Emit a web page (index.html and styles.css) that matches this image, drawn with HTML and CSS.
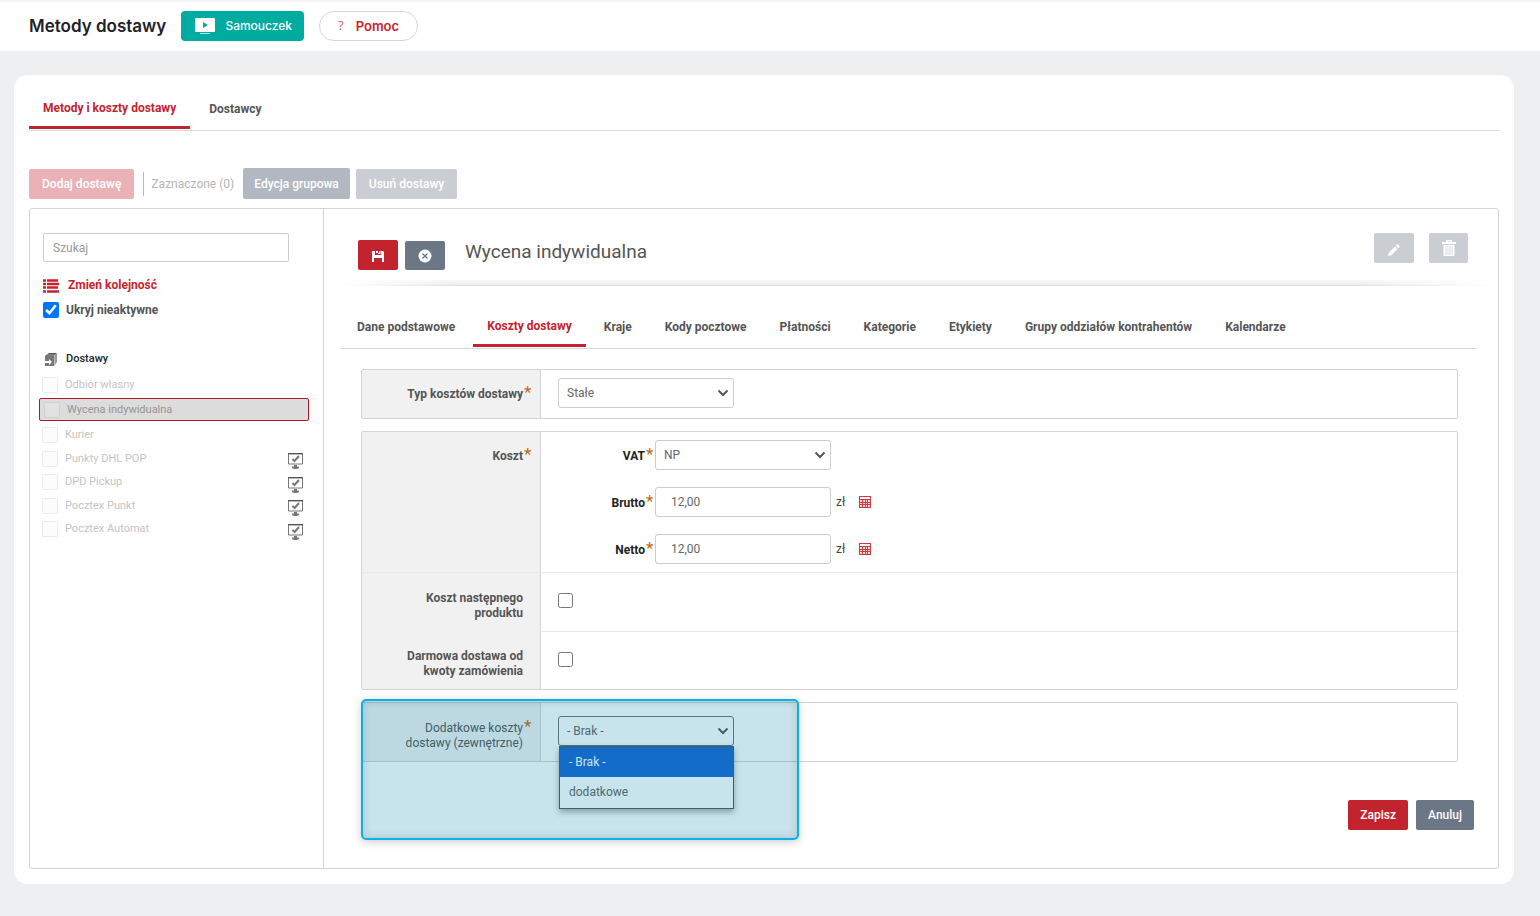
FILE: index.html
```html
<!DOCTYPE html>
<html lang="pl">
<head>
  <meta charset="UTF-8">
  <meta name="viewport" content="width=device-width, initial-scale=1.0">
  <title>Metody dostawy</title>
  <link rel="stylesheet" href="styles.css">
</head>
<body>
  <!-- shared icons -->
  <svg class="sprite" aria-hidden="true">
    <symbol id="monitor" viewBox="0 0 16 16">
      <path d="M.5 1h14v10H.5z" fill="#fff" stroke="#777"/>
      <path d="M0 .5h15" stroke="#555"/>
      <path d="M4.500 6l2 2L11 3" fill="none" stroke="#777" stroke-width="2"/>
      <path d="M6 12h3v1.500h2V15l-2 1H6l-2-1v-1.500h2z" fill="#777"/>
    </symbol>
    <symbol id="calc" viewBox="0 0 12 12">
      <rect x="0" y="0" width="12" height="12" fill="#cb3c43"/>
      <path d="M1 1h10v2H1z" fill="#fff"/>
      <path d="M1 4h2v2H1zM4 4h2v2H4zM7 4h1v2H7zM9 4h2v2H9zM1 7h2v1H1zM4 7h2v1H4zM7 7h1v1H7zM9 7h2v1H9zM1 9h2v2H1zM4 9h2v2H4zM7 9h1v2H7zM9 9h2v2H9z" fill="#f6dadb"/>
    </symbol>
  </svg>

  <header class="topbar">
    <h1>Metody dostawy</h1>
    <button type="button" class="tutorial">
      <svg width="20" height="16" viewBox="0 0 20 16"><rect width="20" height="14" rx="1" fill="#fff"/><path d="M8 4l5 3-5 3z" fill="#00aba0"/><path d="M5 15.500h10" stroke="#b5e5e1"/></svg>
      Samouczek
    </button>
    <button type="button" class="help"><span class="question">?</span>Pomoc</button>
  </header>

  <div class="card">
    <nav class="tabs">
      <a href="#" class="tab active">Metody i koszty dostawy</a>
      <a href="#" class="tab">Dostawcy</a>
    </nav>

    <div class="toolbar">
      <button type="button" class="btn btn-add" disabled>Dodaj dostawę</button>
      <span class="selected-count">Zaznaczone (0)</span>
      <button type="button" class="btn btn-group">Edycja grupowa</button>
      <button type="button" class="btn btn-muted" disabled>Usuń dostawy</button>
    </div>

    <div class="panel">
      <aside class="sidebar">
        <input type="search" class="search" placeholder="Szukaj" aria-label="Szukaj">
        <a href="#" class="reorder">
          <svg width="16" height="16" viewBox="0 0 16 16"><path d="M0 3.500h3M4 3.500h11M0 7h3M4 7h12M0 10.500h3M4 10.500h11M0 14.500h3M4 14.500h12" stroke="#c8232c" stroke-width="2.500"/></svg>
          Zmień kolejność
        </a>
        <label class="hide-inactive"><input type="checkbox" checked>Ukryj nieaktywne</label>

        <h2 class="list-title">
          <svg width="12" height="13" viewBox="0 0 12 13"><path d="M0 3l4-3h8L9 3z" fill="#555"/><path d="M9 3l3-3v9l-3 4z" fill="#999"/><path d="M0 3h9v10H0z" fill="#777"/><path d="M0 8h4V6l3 3-3 3v-2H0z" fill="#fff"/><path d="M9.500 3v9M2 2h8" stroke="#ddd" stroke-width=".6"/></svg>
          Dostawy
        </h2>
        <ul class="list">
          <li><label><input type="checkbox" disabled>Odbiór własny</label></li>
          <li class="current"><label><input type="checkbox" disabled>Wycena indywidualna</label></li>
          <li><label><input type="checkbox" disabled>Kurier</label></li>
          <li><label><input type="checkbox" disabled>Punkty DHL POP</label><svg class="monitor"><use href="#monitor"/></svg></li>
          <li><label><input type="checkbox" disabled>DPD Pickup</label><svg class="monitor"><use href="#monitor"/></svg></li>
          <li><label><input type="checkbox" disabled>Pocztex Punkt</label><svg class="monitor"><use href="#monitor"/></svg></li>
          <li><label><input type="checkbox" disabled>Pocztex Automat</label><svg class="monitor"><use href="#monitor"/></svg></li>
        </ul>
      </aside>

      <main class="content">
        <div class="content-header">
          <button type="button" class="icon-btn save" aria-label="Zapisz">
            <svg width="12" height="14" viewBox="0 0 12 14"><path d="M0 3h3v4h6V3h2l1 1v10h-2v-4H2v4H0zM4 3h2v2H4zM7 3h1.500v3H6V5h1z" fill="#fff"/></svg>
          </button>
          <button type="button" class="icon-btn cancel" aria-label="Anuluj">
            <svg width="14" height="14" viewBox="0 0 14 14"><circle cx="7" cy="7" r="6.500" fill="#fff"/><path d="M4.500 4.500l5 5M9.500 4.500l-5 5" stroke="#6b7785" stroke-width="1.300"/></svg>
          </button>
          <h2>Wycena indywidualna</h2>
          <button type="button" class="icon-btn tool" aria-label="Edytuj" disabled>
            <svg width="14" height="18" viewBox="0 0 14 18"><path d="M1 17l.5-3L8 7.500l2.500 2.500L4 16.500zM8.800 6.700L10.500 5 13 7.500l-1.700 1.700z" fill="#fff"/></svg>
          </button>
          <button type="button" class="icon-btn tool" aria-label="Usuń" disabled>
            <svg width="16" height="16" viewBox="0 0 16 16"><path d="M5 2V0h6v2h4v2H1V2zM6.500 1.200V2h3v-.8zM2.500 5h11v11h-11z" fill="#fff"/><path d="M5 6v9M7 6v9M9 6v9M11 6v9" stroke="#d9dbdf"/></svg>
          </button>
        </div>

        <nav class="tabs subtabs">
          <a href="#" class="tab">Dane podstawowe</a>
          <a href="#" class="tab active">Koszty dostawy</a>
          <a href="#" class="tab">Kraje</a>
          <a href="#" class="tab">Kody pocztowe</a>
          <a href="#" class="tab">Płatności</a>
          <a href="#" class="tab">Kategorie</a>
          <a href="#" class="tab">Etykiety</a>
          <a href="#" class="tab">Grupy oddziałów kontrahentów</a>
          <a href="#" class="tab">Kalendarze</a>
        </nav>

        <form class="form">
          <section class="group">
            <div class="row">
              <label class="row-label" for="costType"><span>Typ kosztów dostawy</span><b class="req">*</b></label>
              <div class="row-field single">
                <select id="costType" class="control"><option>Stałe</option></select>
              </div>
            </div>
          </section>

          <section class="group">
            <div class="row">
              <div class="row-label"><span>Koszt</span><b class="req">*</b></div>
              <div class="row-field prices">
                <div class="price">
                  <label for="vat">VAT<b class="req">*</b></label>
                  <select id="vat" class="control"><option>NP</option></select>
                </div>
                <div class="price">
                  <label for="gross">Brutto<b class="req">*</b></label>
                  <input type="text" id="gross" class="control" value="12,00">
                  <span class="unit">zł</span><svg class="calc"><use href="#calc"/></svg>
                </div>
                <div class="price">
                  <label for="net">Netto<b class="req">*</b></label>
                  <input type="text" id="net" class="control" value="12,00">
                  <span class="unit">zł</span><svg class="calc"><use href="#calc"/></svg>
                </div>
              </div>
            </div>
            <div class="row line-full">
              <label class="row-label two-line" for="nextCost"><span>Koszt następnego produktu</span></label>
              <div class="row-field"><input type="checkbox" id="nextCost" class="check"></div>
            </div>
            <div class="row line-field">
              <label class="row-label two-line" for="freeShipping"><span>Darmowa dostawa od kwoty zamówienia</span></label>
              <div class="row-field"><input type="checkbox" id="freeShipping" class="check"></div>
            </div>
          </section>

          <div class="extra">
            <section class="group">
              <div class="row">
                <label class="row-label two-line plain" for="extraCost"><span>Dodatkowe koszty dostawy (zewnętrzne)</span><b class="req">*</b></label>
                <div class="row-field">
                  <div class="dropdown">
                    <select id="extraCost" class="control open"><option>- Brak -</option><option>dodatkowe</option></select>
                    <ul class="options">
                      <li class="chosen">- Brak -</li>
                      <li>dodatkowe</li>
                    </ul>
                  </div>
                </div>
              </div>
            </section>
            <div class="highlight"></div>
          </div>

          <div class="actions">
            <button type="submit" class="btn btn-save">Zapisz</button>
            <button type="button" class="btn btn-cancel">Anuluj</button>
          </div>
        </form>
      </main>
    </div>
  </div>
</body>
</html>
```
FILE: styles.css
```css
* {
  box-sizing: border-box;
}

body {
  margin: 0;
  background: #eeeff1;
  font-family: Roboto, "Liberation Sans", sans-serif;
  font-size: 12px;
  line-height: 16px;
  color: #555;
}

h1, h2, ul {
  margin: 0;
  padding: 0;
}

ul {
  list-style: none;
}

a {
  text-decoration: none;
}

button, input, select {
  font-family: inherit;
  font-size: 12px;
}

button {
  border: none;
  padding: 0;
  cursor: pointer;
}

svg {
  display: block;
  flex: none;
}

.sprite {
  position: absolute;
  width: 0;
  height: 0;
}

/* top bar */
.topbar {
  display: flex;
  align-items: center;
  gap: 15px;
  height: 51px;
  padding: 0 29px 2px;
  background: #fff;
  border-top: 2px solid #f4f5f6;
  font-family: Inter, sans-serif;
}

.topbar h1 {
  font-size: 17px;
  line-height: 24px;
  font-weight: 600;
  color: #1f2229;
}

.tutorial, .help {
  display: flex;
  align-items: center;
  height: 30px;
  font-family: Inter, sans-serif;
}

.tutorial {
  gap: 10px;
  padding: 0 12px 0 14px;
  background: #00aba0;
  border-radius: 4px;
  color: #fff;
  font-size: 12px;
  font-weight: 500;
}

.help {
  gap: 12px;
  padding: 0 18px;
  background: #fff;
  border: 1px solid #d5d7db;
  border-radius: 15px;
  color: #c8232c;
  font-size: 13px;
  font-weight: 600;
}

.question {
  padding-bottom: 2px;
  font-family: "Open Sans", sans-serif;
  font-size: 13px;
  font-weight: 400;
  color: #d9605c;
}

/* card */
.card {
  margin: 24px 26px 0 14px;
  padding: 0 15px 15px;
  background: #fff;
  border-radius: 14px;
}

.tabs {
  display: flex;
  align-items: flex-end;
  gap: 5px;
  height: 56px;
  padding-bottom: 1px;
  border-bottom: 1px solid #d9d9d9;
}

.tab {
  padding: 0 14px 12px;
  font-weight: 700;
  color: #555;
}

.tab.active {
  padding-bottom: 10px;
  border-bottom: 3px solid #c3232d;
  color: #c3232d;
}

.toolbar {
  display: flex;
  align-items: center;
  margin: 37px 0 9px;
}

.btn {
  height: 30px;
  padding: 0 12px;
  border-radius: 2px;
  color: #fff;
  font-weight: 500;
}

.toolbar .btn {
  padding: 0 13px;
}

.btn-add {
  background: #eab2b6;
}

.selected-count {
  margin: 0 9px;
  padding: 4px 0 4px 7px;
  border-left: 1px solid #b9b9b9;
  color: #b5b5b5;
}

.toolbar .btn-group {
  height: 31px;
  margin-right: 6px;
  padding: 0 11px;
  background: #b1b8c1;
}

.btn-muted {
  background: #cacdd2;
}

.panel {
  display: flex;
  border: 1px solid #d3d3d3;
  border-radius: 3px;
}

/* left column */
.sidebar {
  width: 294px;
  flex: none;
  padding: 24px 14px 24px 9px;
  border-right: 1px solid #d3d3d3;
}

.search {
  display: block;
  width: 246px;
  height: 29px;
  margin-left: 4px;
  padding: 0 9px;
  border: 1px solid #ccc;
  border-radius: 2px;
}

.search::placeholder {
  color: #999;
}

.reorder {
  display: flex;
  align-items: center;
  gap: 9px;
  margin: 15px 0 9px 4px;
  color: #c8232c;
  font-weight: 700;
}

.hide-inactive {
  display: flex;
  align-items: center;
  gap: 7px;
  margin-left: 4px;
  font-weight: 700;
}

.hide-inactive input {
  width: 16px;
  height: 16px;
  margin: 0;
}

.list-title {
  display: flex;
  align-items: center;
  gap: 9px;
  margin: 33px 0 6px 6px;
  font-size: 11px;
  font-weight: 500;
  color: #222;
}

.list li {
  display: flex;
  align-items: center;
  justify-content: space-between;
  height: 23px;
  padding: 0 5px 0 3px;
  font-size: 11px;
  color: #c4c4c4;
}

.list li:nth-child(odd) {
  height: 24px;
}

.list label {
  display: flex;
  align-items: center;
  gap: 7px;
}

.list input {
  appearance: none;
  width: 16px;
  height: 16px;
  margin: 0;
  background: #fcfcfc;
  border: 1px solid #ebebeb;
  border-radius: 2px;
}

.list .current {
  margin: 1px 0 2px;
  padding-left: 4px;
  background: #dcdcdc;
  border: 1px solid #b01825;
  border-radius: 2px;
  color: #949494;
}

.list .current input {
  background: #e2e2e2;
  border-color: #d2d2d2;
}

.monitor {
  width: 16px;
  height: 16px;
  margin-top: 5px;
}

/* right column */
.content {
  flex: 1;
  padding: 0 21px 38px 17px;
}

.content-header {
  display: flex;
  align-items: flex-end;
  height: 77px;
  margin-right: -18px;
  padding: 0 27px 16px 17px;
  background: linear-gradient(90deg, #fff, transparent 10%, transparent 88%, #fff) bottom / 100% 6px no-repeat,
    linear-gradient(#f8f8f8, #f1f1f1 65%, #dedede) bottom / 100% 6px no-repeat;
}

.content-header h2 {
  flex: 1;
  margin-left: 20px;
  padding-bottom: 6px;
  font-size: 19px;
  line-height: 24px;
  font-weight: 400;
}

.icon-btn {
  display: flex;
  align-items: center;
  justify-content: center;
  width: 40px;
  height: 30px;
  border-radius: 2px;
}

.save {
  background: #c3232d;
}

.cancel {
  height: 29px;
  margin-left: 7px;
  background: #6b7785;
}

.tool {
  margin-bottom: 7px;
  background: #cacdd2;
}

.tool + .tool {
  width: 39px;
  margin-left: 15px;
}

.subtabs {
  height: 63px;
  padding-left: 2px;
}

.subtabs .active {
  margin: 0 -1px;
}

.form {
  padding: 20px 19px 0 20px;
}

.group {
  margin-bottom: 12px;
  border: 1px solid #d3d3d3;
  border-radius: 2px;
}

.row {
  display: flex;
}

.row-label {
  display: flex;
  justify-content: flex-end;
  width: 178px;
  flex: none;
  padding: 17px 17px 0 40px;
  background: #f1f1f1;
  font-weight: 700;
  line-height: 15px;
  text-align: right;
}

.row-label span {
  flex: 1;
}

.req {
  display: inline-block;
  width: 8px;
  padding-left: 1px;
  font-size: 17px;
  font-weight: 400;
  line-height: 15px;
  color: #c8690f;
}

.row-label .req {
  margin-right: -8px;
  line-height: 11px;
}

.row-field {
  flex: 1;
  padding: 8px 17px;
  border-left: 1px solid #d3d3d3;
}

.single {
  padding-bottom: 10px;
}

.control {
  display: block;
  width: 176px;
  height: 30px;
  padding: 0 8px;
  background: #fff;
  border: 1px solid #ccc;
  border-radius: 3px;
  color: #666;
}

select.control {
  appearance: none;
  background: #fff url("data:image/svg+xml,%3Csvg xmlns='http://www.w3.org/2000/svg' width='12' height='8'%3E%3Cpath d='M1.500 1.500L6 6l4.500-4.500' fill='none' stroke='%23555' stroke-width='2'/%3E%3C/svg%3E") right 4px center no-repeat;
}

input.control {
  padding: 0 15px;
}

.prices {
  display: flex;
  flex-direction: column;
  gap: 17px;
  padding-left: 0;
}

.price {
  display: flex;
  align-items: center;
}

.price label {
  width: 114px;
  padding-right: 2px;
  color: #222;
  font-weight: 700;
  text-align: right;
}

.unit {
  width: 23px;
  margin-left: 5px;
  color: #444;
}

.calc {
  width: 12px;
  height: 12px;
}

.line-full {
  border-top: 1px solid #e9e9e9;
}

.line-field .row-field {
  border-top: 1px solid #e9e9e9;
}

.two-line {
  padding-top: 18px;
  padding-bottom: 10px;
}

.check {
  display: block;
  width: 15px;
  height: 15px;
  margin: 12px 0;
}

.plain {
  font-weight: 400;
}

/* open drop-down with the marked area over it */
.extra {
  position: relative;
}

.extra .row-field {
  padding: 13px 17px 15px;
}

.dropdown {
  position: relative;
}

.open {
  border-color: #707070;
}

.options {
  position: absolute;
  top: 30px;
  left: 1px;
  width: 175px;
  background: #fff;
  border: 1px solid #555;
  box-shadow: 0 3px 6px rgba(0, 0, 0, 0.35);
}

.options li {
  height: 31px;
  padding: 0 9px;
  line-height: 31px;
  color: #666;
}

.options .chosen {
  height: 30px;
  background: #1967d2;
  color: #fff;
}

.highlight {
  position: absolute;
  top: -3px;
  left: 0;
  width: 438px;
  height: 141px;
  background: rgba(0, 127, 163, 0.22);
  border: 2px solid #09b1ea;
  border-radius: 5px;
  box-shadow: 0 2px 8px rgba(0, 0, 0, 0.2), inset 0 0 9px rgba(0, 0, 0, 0.14);
  pointer-events: none;
}

.actions {
  display: flex;
  justify-content: flex-end;
  gap: 8px;
  margin: 38px -16px 0 0;
}

.btn-save {
  background: #c3232d;
}

.btn-cancel {
  background: #6b7785;
}
```
